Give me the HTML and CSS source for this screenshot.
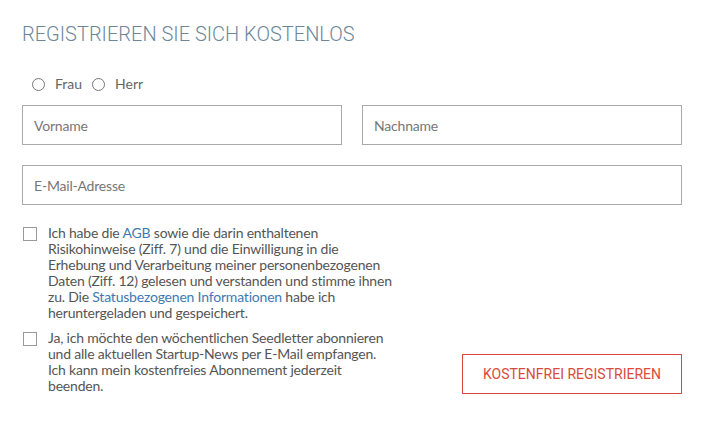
FILE: index.html
```html
<!DOCTYPE html>
<html lang="de">
    <head>
        <meta charset="UTF-8" />
        <meta name="viewport" content="width=device-width, initial-scale=1.0" />
        <title>Registrieren</title>

        <link rel="stylesheet" href="styles.css">
    </head>
    <body>
        <main>
            <form class="signup">
                <h2 class="title">REGISTRIEREN SIE SICH KOSTENLOS</h2>

                <div class="salutation">
                    <label class="radio"><span class="dot"></span>Frau</label>
                    <label class="radio"><span class="dot"></span>Herr</label>
                </div>

                <div class="row">
                    <input type="text" class="field" placeholder="Vorname" />
                    <input type="text" class="field" placeholder="Nachname" />
                </div>
                <div class="row single">
                    <input type="email" class="field" placeholder="E-Mail-Adresse" />
                </div>

                <div class="bottom">
                    <div class="consents">
                        <label class="check">
                            <span class="box"></span>
                            <span class="text">Ich habe die <a href="#">AGB</a> sowie die darin enthaltenen Risikohinweise (Ziff. 7) und die Einwilligung in die Erhebung und Verarbeitung meiner personenbezogenen Daten (Ziff. 12) gelesen und verstanden und stimme ihnen zu. Die <a href="#">Statusbezogenen Informationen</a> habe ich heruntergeladen und gespeichert.</span>
                        </label>
                        <label class="check">
                            <span class="box"></span>
                            <span class="text">Ja, ich möchte den wöchentlichen Seedletter abonnieren und alle aktuellen Startup-News per E-Mail empfangen. Ich kann mein kostenfreies Abonnement jederzeit beenden.</span>
                        </label>
                    </div>
                    <button type="button" class="submit">KOSTENFREI REGISTRIEREN</button>
                </div>
            </form>
        </main>
    </body>
</html>
```

FILE: styles.css
```css
body {
    margin: 0px;
    padding: 0px;
    font-family: Lato, "Liberation Sans", sans-serif;
    background-color: #ffffff;
    color: #555555;
}

.signup {
    width: 660px;
    padding: 22px 22px 0 22px;
}

.title {
    margin: 0;
    font-family: Roboto, sans-serif;
    font-weight: 300;
    font-size: 20px;
    line-height: 24px;
    color: #6d8799;
}

.salutation {
    display: flex;
    gap: 10px;
    margin-top: 30px;
    padding-left: 10px;
    font-size: 14px;
    line-height: 16px;
    color: #666666;
}

.radio {
    display: flex;
    align-items: center;
    gap: 10px;
}

.dot {
    width: 11px;
    height: 11px;
    border: 1px solid #777777;
    border-radius: 50%;
}

.row {
    display: grid;
    grid-template-columns: 1fr 1fr;
    gap: 20px;
    margin-top: 13px;
}

.row.single {
    grid-template-columns: 1fr;
    margin-top: 20px;
}

.field {
    box-sizing: border-box;
    height: 40px;
    padding: 0 11px;
    border: 1px solid #aaaaaa;
    font-family: Lato, sans-serif;
    font-size: 14px;
    letter-spacing: -0.2px;
    color: #555555;
    background-color: #ffffff;
}

.field::placeholder {
    color: #777777;
}

.bottom {
    display: flex;
    justify-content: space-between;
    align-items: flex-end;
    margin-top: 20px;
}

.consents {
    display: flex;
    flex-direction: column;
    gap: 9px;
}

.check {
    display: flex;
    gap: 11px;
    font-size: 14px;
    line-height: 16px;
    letter-spacing: -0.2px;
}

.box {
    flex: none;
    width: 12px;
    height: 12px;
    margin-top: 2px;
    margin-left: 1px;
    border: 1px solid #999999;
}

.text {
    width: 346px;
}

.text a {
    color: #3d7ab0;
    text-decoration: none;
}

.submit {
    box-sizing: border-box;
    width: 220px;
    height: 40px;
    margin-bottom: 0;
    border: 1px solid #d9483a;
    background-color: #ffffff;
    color: #db4a3a;
    font-family: Roboto, sans-serif;
    font-size: 14px;
    cursor: pointer;
}
```
